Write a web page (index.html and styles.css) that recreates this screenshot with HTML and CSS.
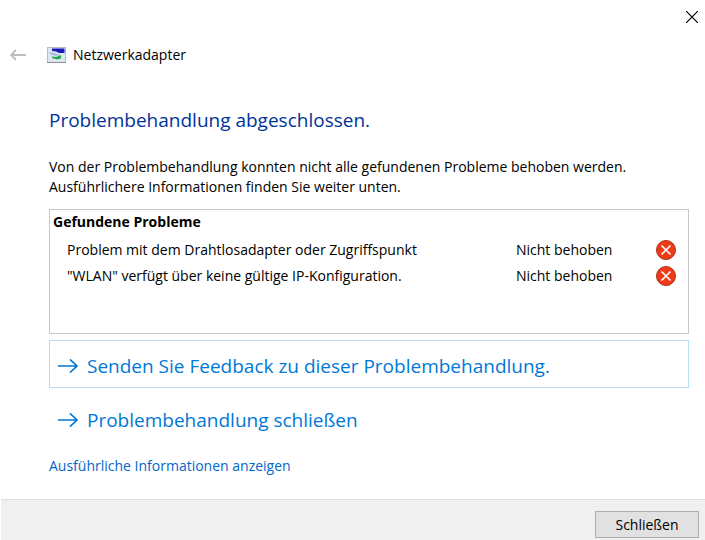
FILE: index.html
```html
<!DOCTYPE html>
<html lang="de">
<head>
<meta charset="UTF-8">
<meta name="viewport" content="width=device-width, initial-scale=1.0">
<title>Netzwerkadapter</title>
<link rel="stylesheet" href="styles.css">
</head>
<body>

<div class="window">
  <div class="title-bar">
    <button class="icon-button" type="button" aria-label="Fenster schließen">
      <svg width="12" height="12" viewBox="0 0 12 12"><path d="M0 0L12 12M12 0L0 12" stroke="#000" stroke-width="1.2"/></svg>
    </button>
  </div>

  <header class="header">
    <button class="icon-button" type="button" aria-label="Zurück" disabled>
      <svg width="16" height="12" viewBox="0 0 16 12"><path d="M16 6H1M6 1L1 6L6 11" fill="none" stroke="#bdbdbd" stroke-width="1.8"/></svg>
    </button>
    <svg class="adapter-icon" width="19" height="16" viewBox="0 0 19 16">
      <rect x="0.5" y="0.5" width="18" height="15" fill="#dfe8f2" stroke="#b4bcc6"/>
      <path d="M0 15.500H19" stroke="#8a939d"/>
      <path d="M5 1.500H17.500V6H12L9 4.500L5 4Z" fill="#1a1ab8"/>
      <path d="M2 5L8 6L13 8L9 9L3 7.500Z" fill="#a9bfdc"/>
      <path d="M5 9.500L9 10L14 8V11.500L10 12.500L5 11Z" fill="#1fa84f"/>
    </svg>
    <span class="header-title">Netzwerkadapter</span>
  </header>

  <main class="content">
    <h1>Problembehandlung abgeschlossen.</h1>
    <p class="intro">Von der Problembehandlung konnten nicht alle gefundenen Probleme behoben werden. Ausführlichere Informationen finden Sie weiter unten.</p>

    <div class="problems">
      <table>
        <caption>Gefundene Probleme</caption>
        <tbody>
          <tr>
            <td>Problem mit dem Drahtlosadapter oder Zugriffspunkt</td>
            <td class="status">Nicht behoben</td>
            <td class="mark">
              <svg width="20" height="20" viewBox="0 0 20 20"><circle cx="10" cy="10" r="9.500" fill="#f03a17" stroke="#a8321c"/><path d="M5.500 5.500L14.500 14.500M14.500 5.500L5.500 14.500" stroke="#fff" stroke-width="1.7"/></svg>
            </td>
          </tr>
          <tr>
            <td>"WLAN" verfügt über keine gültige IP-Konfiguration.</td>
            <td class="status">Nicht behoben</td>
            <td class="mark">
              <svg width="20" height="20" viewBox="0 0 20 20"><circle cx="10" cy="10" r="9.500" fill="#f03a17" stroke="#a8321c"/><path d="M5.500 5.500L14.500 14.500M14.500 5.500L5.500 14.500" stroke="#fff" stroke-width="1.7"/></svg>
            </td>
          </tr>
        </tbody>
      </table>
    </div>

    <button class="command focused" type="button">
      <svg width="20" height="14" viewBox="0 0 20 14"><path d="M0 7H19M12 0.500L19 7L12 13.500" fill="none" stroke="#0078d7" stroke-width="1.7"/></svg>
      Senden Sie Feedback zu dieser Problembehandlung.
    </button>
    <button class="command" type="button">
      <svg width="20" height="14" viewBox="0 0 20 14"><path d="M0 7H19M12 0.500L19 7L12 13.500" fill="none" stroke="#0078d7" stroke-width="1.7"/></svg>
      Problembehandlung schließen
    </button>

    <a class="details" href="#">Ausführliche Informationen anzeigen</a>
  </main>

  <footer class="footer">
    <button class="close-button" type="button">Schließen</button>
  </footer>
</div>

</body>
</html>
```

FILE: styles.css
```css
* {
  box-sizing: border-box;
}
body {
  margin: 0;
  background-color: #fff;
  color: #000;
  font-family: "Open Sans", "Noto Sans", sans-serif;
  font-size: 14px;
  line-height: 20px;
}
button {
  font: inherit;
  color: inherit;
}
.window {
  display: flex;
  flex-direction: column;
  min-height: 100vh;
}
.title-bar {
  display: flex;
  justify-content: flex-end;
  padding: 11px 7px;
}
.icon-button {
  display: flex;
  padding: 0;
  border: none;
  background: none;
}
.header {
  display: flex;
  align-items: center;
  padding: 11px 10px;
}
.adapter-icon {
  margin-left: 21px;
  margin-right: 7px;
}
.content {
  flex: 1;
  display: flex;
  flex-direction: column;
  padding: 32px 16px 20px 49px;
}
h1 {
  margin: 0 0 25px;
  font-size: 19px;
  font-weight: normal;
  line-height: 24px;
  color: #003399;
}
.intro {
  margin: 0 0 12px;
  max-width: 600px;
}
/* Liste der gefundenen Probleme */
.problems {
  min-height: 125px;
  margin-bottom: 6px;
  padding: 2px 12px 2px 3px;
  border: 1px solid #c8c8c8;
}
table {
  width: 100%;
  border-collapse: collapse;
}
caption {
  padding-bottom: 5px;
  font-weight: bold;
  text-align: left;
}
td {
  height: 26px;
  padding: 0;
}
td:first-child {
  padding-left: 14px;
}
.status {
  width: 140px;
}
.mark {
  width: 20px;
}
.mark svg {
  display: block;
}
.command {
  display: flex;
  align-items: center;
  gap: 9px;
  min-height: 48px;
  margin-bottom: 6px;
  padding: 4px 8px 0;
  border: 1px solid transparent;
  background: none;
  color: #0078d7;
  font-size: 19px;
  line-height: 24px;
  text-align: left;
}
.command.focused {
  border-color: #b9dcf4;
}
.details {
  align-self: flex-start;
  margin-top: 8px;
  color: #0066cc;
  text-decoration: none;
}
.footer {
  display: flex;
  justify-content: flex-end;
  margin-left: 1px;
  padding: 11px 6px 2px;
  border-top: 1px solid #dfdfdf;
  background-color: #f0f0f0;
}
.close-button {
  min-width: 104px;
  height: 27px;
  padding: 0 12px;
  border: 1px solid #adadad;
  background-color: #e1e1e1;
}
```
